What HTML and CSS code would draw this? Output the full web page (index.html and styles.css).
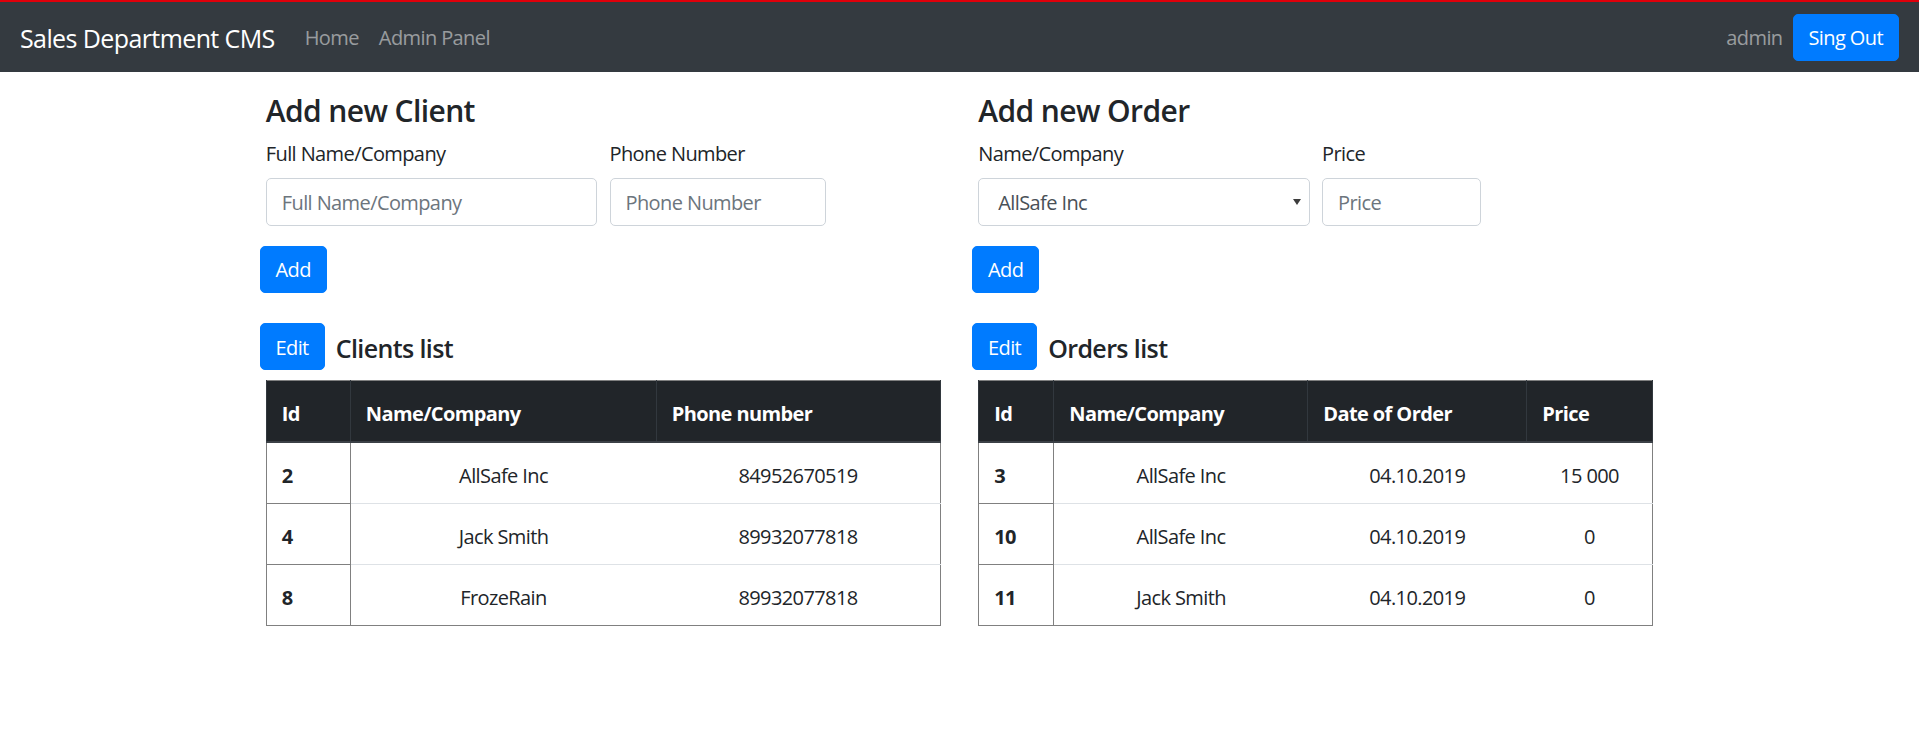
FILE: index.html
```html
<!DOCTYPE html>
<html lang="en">
<head>
<meta charset="utf-8">
<title>Sales Department CMS</title>
<link rel="stylesheet" href="styles.css">
</head>
<body>
<nav class="navbar">
  <div class="nav-left">
    <a class="brand" href="#">Sales Department CMS</a>
    <ul class="nav-links">
      <li><a class="nav-link" href="#">Home</a></li>
      <li><a class="nav-link" href="#">Admin Panel</a></li>
    </ul>
  </div>
  <div class="nav-right">
    <span class="nav-user">admin</span>
    <button class="btn btn-primary">Sing Out</button>
  </div>
</nav>

<main class="container">
  <div class="row">
    <section class="col">
      <h4 class="section-title">Add new Client</h4>
      <form class="form">
        <div class="form-row">
          <div class="form-group col-half">
            <label class="label">Full Name/Company</label>
            <input class="input" type="text" placeholder="Full Name/Company">
          </div>
          <div class="form-group col-third">
            <label class="label">Phone Number</label>
            <input class="input" type="text" placeholder="Phone Number">
          </div>
        </div>
        <button type="button" class="btn btn-primary btn-shift">Add</button>
      </form>

      <div class="list-header">
        <button class="btn btn-primary btn-shift">Edit</button>
        <h5 class="list-title">Clients list</h5>
      </div>
      <table class="table">
        <colgroup>
          <col class="c-id-1"><col class="c-name-1"><col>
        </colgroup>
        <thead>
          <tr><th>Id</th><th>Name/Company</th><th>Phone number</th></tr>
        </thead>
        <tbody>
          <tr><th>2</th><td>AllSafe Inc</td><td>84952670519</td></tr>
          <tr><th>4</th><td>Jack Smith</td><td>89932077818</td></tr>
          <tr><th>8</th><td>FrozeRain</td><td>89932077818</td></tr>
        </tbody>
      </table>
    </section>

    <section class="col">
      <h4 class="section-title">Add new Order</h4>
      <form class="form">
        <div class="form-row">
          <div class="form-group col-half">
            <label class="label">Name/Company</label>
            <div class="select-wrap">
              <select class="input select">
                <option>AllSafe Inc</option>
                <option>Jack Smith</option>
                <option>FrozeRain</option>
              </select>
            </div>
          </div>
          <div class="form-group col-quarter">
            <label class="label">Price</label>
            <input class="input" type="text" placeholder="Price">
          </div>
        </div>
        <button type="button" class="btn btn-primary btn-shift">Add</button>
      </form>

      <div class="list-header">
        <button class="btn btn-primary btn-shift">Edit</button>
        <h5 class="list-title">Orders list</h5>
      </div>
      <table class="table">
        <colgroup>
          <col class="c-id-2"><col class="c-name-2"><col class="c-date-2"><col>
        </colgroup>
        <thead>
          <tr><th>Id</th><th>Name/Company</th><th>Date of Order</th><th>Price</th></tr>
        </thead>
        <tbody>
          <tr><th>3</th><td>AllSafe Inc</td><td>04.10.2019</td><td>15 000</td></tr>
          <tr><th>10</th><td>AllSafe Inc</td><td>04.10.2019</td><td>0</td></tr>
          <tr><th>11</th><td>Jack Smith</td><td>04.10.2019</td><td>0</td></tr>
        </tbody>
      </table>
    </section>
  </div>
</main>
</body>
</html>
```

FILE: styles.css
```css
* { box-sizing: border-box; }

html, body {
  margin: 0;
  padding: 0;
}

body {
  font-family: "Open Sans", "Noto Sans", "Liberation Sans", sans-serif;
  font-size: 20px;
  line-height: 1.5;
  color: #212529;
  background: #fff;
  letter-spacing: -0.03em;
}

/* ---------- navbar ---------- */
.navbar {
  display: flex;
  justify-content: space-between;
  align-items: center;
  height: 72px;
  padding: 10px 20px;
  background: #343a40;
  border-top: 2px solid #e0000b;
}

.nav-left, .nav-right {
  display: flex;
  align-items: center;
}

.brand {
  font-size: 25px;
  line-height: 37.5px;
  padding: 7.5px 0 5px;
  margin-right: 20px;
  color: #fff;
  text-decoration: none;
}

.nav-links {
  display: flex;
  list-style: none;
  margin: 0;
  padding: 0;
}

.nav-link {
  display: block;
  padding: 11px 10px 9px;
  color: rgba(255, 255, 255, 0.5);
  text-decoration: none;
}

.nav-user {
  color: rgba(255, 255, 255, 0.5);
  margin-right: 10px;
  padding-top: 2px;
}

/* ---------- buttons ---------- */
.btn {
  display: inline-block;
  font-family: inherit;
  font-size: 20px;
  line-height: 30px;
  letter-spacing: inherit;
  padding: 8.5px 15px 6.5px;
  border: 1.25px solid transparent;
  border-radius: 5px;
  cursor: pointer;
}

.btn-primary {
  color: #fff;
  background: #007bff;
  border-color: #007bff;
}

.btn-shift {
  margin-left: -6.25px;
}

/* ---------- layout ---------- */
.container {
  width: 1425px;
  margin: 0 auto;
  padding: 20px 18.75px 0;
}

.row {
  display: flex;
  margin: 0 -18.75px;
}

.col {
  flex: 0 0 50%;
  max-width: 50%;
  padding: 0 18.75px;
}

.section-title {
  margin: 0 0 10px;
  padding-top: 1px;
  height: 36px;
  font-size: 30px;
  font-weight: 600;
  line-height: 1.2;
}

/* ---------- forms ---------- */
.form-row {
  display: flex;
  margin: 0 -6.25px;
}

.form-group {
  padding: 0 6.25px;
  margin-bottom: 20px;
}

.col-half { flex: 0 0 50%; max-width: 50%; }
.col-third { flex: 0 0 33.3333%; max-width: 33.3333%; }
.col-quarter { flex: 0 0 25%; max-width: 25%; }

.label {
  display: inline-block;
  margin-bottom: 10px;
  padding-top: 1px;
  height: 30px;
}

.input {
  display: block;
  width: 100%;
  height: 47.5px;
  padding: 8.5px 15px 6.5px;
  font-family: inherit;
  font-size: 20px;
  line-height: 30px;
  letter-spacing: inherit;
  color: #495057;
  background: #fff;
  border: 1.25px solid #ced4da;
  border-radius: 5px;
}

.input::placeholder {
  color: #6c757d;
  opacity: 1;
}

.select-wrap {
  position: relative;
}

.select {
  -webkit-appearance: none;
  appearance: none;
  padding-left: 19px;
  color: #495057;
}

.select-wrap::after {
  content: "";
  position: absolute;
  right: 9px;
  top: 21px;
  width: 0;
  height: 0;
  border-left: 4px solid transparent;
  border-right: 4px solid transparent;
  border-top: 6px solid #3d3d3d;
  pointer-events: none;
}

/* ---------- lists ---------- */
.list-header {
  display: flex;
  align-items: center;
  margin-top: 30.5px;
}

.list-title {
  margin: 0 0 0 11px;
  padding-top: 2px;
  font-size: 25px;
  font-weight: 600;
  line-height: 1.2;
}

.table {
  width: 100%;
  margin-top: 10px;
  border-collapse: collapse;
  table-layout: fixed;
  border: 1.25px solid #808080;
}

.c-id-1 { width: 84px; }
.c-name-1 { width: 306px; }
.c-id-2 { width: 75px; }
.c-name-2 { width: 254px; }
.c-date-2 { width: 219px; }

.table th,
.table td {
  padding: 17.5px 15px 12.5px;
  line-height: 30px;
  vertical-align: top;
}

.table thead th {
  background: #212529;
  color: #fff;
  font-weight: 700;
  text-align: left;
  border-left: 1px solid #32383e;
  border-right: 1px solid #32383e;
  border-bottom: 2.5px solid #3b4046;
}

.table tbody th {
  text-align: left;
  font-weight: 700;
  border-right: 1.25px solid #808080;
  border-bottom: 1.25px solid #808080;
}

.table tbody td {
  text-align: center;
  border-top: 1.25px solid #dee2e6;
}
```
